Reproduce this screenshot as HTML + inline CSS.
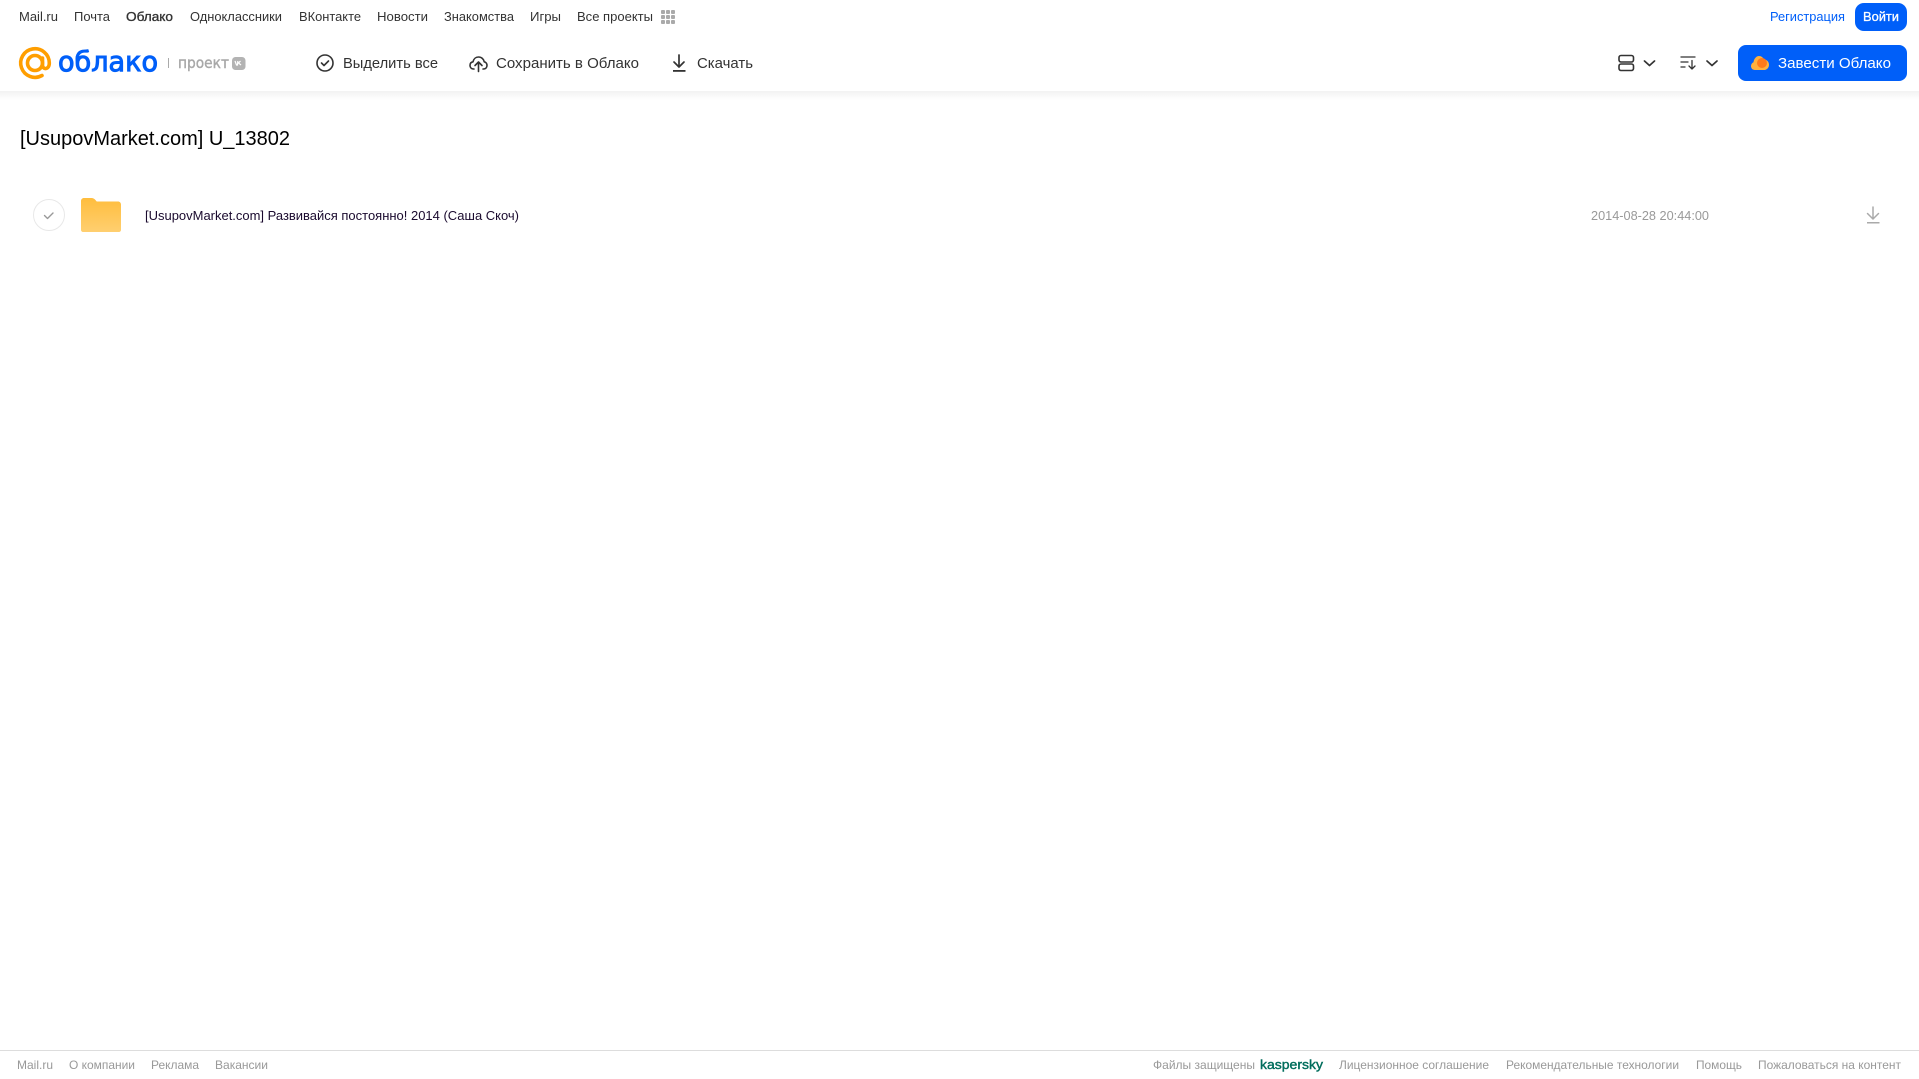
<!DOCTYPE html>
<html lang="ru">
<head>
<meta charset="utf-8">
<title>[UsupovMarket.com] U_13802</title>
<style>
html,body{margin:0;padding:0;background:#fff;width:1919px;height:1079px;overflow:hidden}
svg{display:block;position:absolute;left:0;top:0}
text{font-family:"Liberation Sans",sans-serif}
.n{font-size:13px;fill:#333}
.t{font-size:14.5px;fill:#333}
.f{font-size:12px;fill:#999}
</style>
</head>
<body>
<svg width="1919" height="1079" viewBox="0 0 1919 1079" xmlns="http://www.w3.org/2000/svg">
<defs>
<linearGradient id="sh" x1="0" y1="0" x2="0" y2="1"><stop offset="0" stop-color="#f2f2f2"/><stop offset="1" stop-color="#fff"/></linearGradient>
<linearGradient id="fd" x1="0" y1="0" x2="0" y2="1"><stop offset="0" stop-color="#ffbd3d"/><stop offset="1" stop-color="#ffcf70"/></linearGradient>
</defs>
<rect x="0" y="91" width="1919" height="9" fill="url(#sh)"/>

<!-- top nav -->
<text class="n" x="19" y="21" textLength="39" lengthAdjust="spacingAndGlyphs">Mail.ru</text>
<text class="n" x="74" y="21" textLength="36" lengthAdjust="spacingAndGlyphs">Почта</text>
<text class="n" x="126" y="21" textLength="47" lengthAdjust="spacingAndGlyphs" stroke="#333" stroke-width=".35">Облако</text>
<text class="n" x="190" y="21" textLength="92" lengthAdjust="spacingAndGlyphs">Одноклассники</text>
<text class="n" x="299" y="21" textLength="62" lengthAdjust="spacingAndGlyphs">ВКонтакте</text>
<text class="n" x="377" y="21" textLength="51" lengthAdjust="spacingAndGlyphs">Новости</text>
<text class="n" x="444" y="21" textLength="70" lengthAdjust="spacingAndGlyphs">Знакомства</text>
<text class="n" x="530" y="21" textLength="31" lengthAdjust="spacingAndGlyphs">Игры</text>
<text class="n" x="577" y="21" textLength="76" lengthAdjust="spacingAndGlyphs">Все проекты</text>
<g fill="#aaa">
<rect x="661" y="10" width="4" height="4" rx="1"/><rect x="666" y="10" width="4" height="4" rx="1"/><rect x="671" y="10" width="4" height="4" rx="1"/>
<rect x="661" y="15" width="4" height="4" rx="1"/><rect x="666" y="15" width="4" height="4" rx="1"/><rect x="671" y="15" width="4" height="4" rx="1"/>
<rect x="661" y="20" width="4" height="4" rx="1"/><rect x="666" y="20" width="4" height="4" rx="1"/><rect x="671" y="20" width="4" height="4" rx="1"/>
</g>
<text x="1770" y="21" font-size="13" fill="#005ff9" textLength="75" lengthAdjust="spacingAndGlyphs">Регистрация</text>
<rect x="1855" y="3" width="52" height="28" rx="9" fill="#005ff9"/>
<text x="1863" y="21" font-size="13" fill="#fff" stroke="#fff" stroke-width=".3" textLength="36" lengthAdjust="spacingAndGlyphs">Войти</text>

<!-- logo -->
<circle cx="35" cy="63" r="7.500" fill="none" stroke="#ff9e00" stroke-width="3.600"/>
<path d="M42.500 58V65c0 5 6.800 5 6.800-2A14.300 14.300 0 1 0 42 75.500" fill="none" stroke="#ff9e00" stroke-width="3.600" stroke-linecap="round"/>
<text x="58" y="71" font-size="28" fill="#005ff9" stroke="#005ff9" stroke-width="1" style="font-family:'DejaVu Sans',sans-serif" textLength="100" lengthAdjust="spacingAndGlyphs">облако</text>
<rect x="168" y="58" width="1" height="10" fill="#aaa"/>
<text x="178" y="68" font-size="15" fill="#a8a8a8" stroke="#a8a8a8" stroke-width=".4" style="font-family:'DejaVu Sans',sans-serif" textLength="51" lengthAdjust="spacingAndGlyphs">проект</text>
<rect x="232" y="57" width="13.500" height="13" rx="3.500" fill="#b3b3b3"/>
<path d="M235 61l1.500 4h1l.3-4m2.700 0l-2 2 2.500 2" fill="none" stroke="#fff" stroke-width="1.200"/>

<!-- toolbar -->
<circle cx="325" cy="63" r="8" fill="none" stroke="#333" stroke-width="1.600"/>
<path d="M321.500 63l2.500 2.500 4.500-4.500" fill="none" stroke="#333" stroke-width="1.600" stroke-linecap="round" stroke-linejoin="round"/>
<text class="t" x="343" y="68" textLength="95" lengthAdjust="spacingAndGlyphs">Выделить все</text>
<path d="M474 69h-.5c-2.300 0-3.500-1.800-3.500-3.600 0-1.900 1.200-3.300 3-3.600.6-2.900 2.800-4.800 5.500-4.800 3 0 5.200 2.100 5.700 4.800 1.600.3 2.800 1.700 2.800 3.600 0 1.900-1.300 3.600-3.500 3.600H483" fill="none" stroke="#333" stroke-width="1.600" stroke-linecap="round" stroke-linejoin="round"/>
<path d="M478.500 71.500V62m-3.500 3.500l3.500-3.500 3.500 3.500" fill="none" stroke="#333" stroke-width="1.600" stroke-linecap="round" stroke-linejoin="round"/>
<text class="t" x="496" y="68" textLength="143" lengthAdjust="spacingAndGlyphs">Сохранить в Облако</text>
<path d="M679 55v12m-5-5l5 5 5-5" fill="none" stroke="#333" stroke-width="1.700" stroke-linecap="round" stroke-linejoin="round"/>
<rect x="673" y="70" width="12.500" height="1.800" fill="#333"/>
<text class="t" x="697" y="68" textLength="56" lengthAdjust="spacingAndGlyphs">Скачать</text>

<!-- right toolbar -->
<rect x="1619" y="55.500" width="14.500" height="6.500" rx="2" fill="none" stroke="#333" stroke-width="1.600"/>
<rect x="1619" y="64" width="14.500" height="6.500" rx="2" fill="none" stroke="#333" stroke-width="1.600"/>
<path d="M1644.500 61l5 4.500 5-4.500" fill="none" stroke="#333" stroke-width="1.700" stroke-linecap="round" stroke-linejoin="round"/>
<path d="M1681 57h14M1681 62h7M1681 67h4M1692 60.500v8.500m-3-3l3 3 3-3" fill="none" stroke="#333" stroke-width="1.300" stroke-linecap="round" stroke-linejoin="round"/>
<path d="M1707 61l5 4.500 5-4.500" fill="none" stroke="#333" stroke-width="1.700" stroke-linecap="round" stroke-linejoin="round"/>
<rect x="1738" y="45" width="169" height="36" rx="8" fill="#005ff9"/>
<path d="M1755 70c-2.500 0-4-1.800-4-4 0-1.800 1-3.200 2.500-3.800.3-3 2.600-6.200 5.500-6.200 2.500 0 4 1.500 4.800 3.500 3 0 5.200 2.300 5.200 5.200 0 3-2.200 5.300-5 5.300z" fill="#ffb13d"/>
<circle cx="1762" cy="63" r="5" fill="#ff7a1a"/>
<text x="1778" y="68" font-size="14.500" fill="#fff" textLength="113" lengthAdjust="spacingAndGlyphs">Завести Облако</text>

<!-- title -->
<text x="20" y="145" font-size="20" fill="#000" textLength="270" lengthAdjust="spacingAndGlyphs">[UsupovMarket.com] U_13802</text>

<!-- row -->
<circle cx="49" cy="215" r="15.500" fill="#fff" stroke="#e8e8e8"/>
<path d="M44.500 215.500l3 3 5.500-5.500" fill="none" stroke="#999" stroke-width="1.400" stroke-linecap="round" stroke-linejoin="round"/>
<path d="M81 201c0-1.700 1.300-3 3-3h7.500c1.500 0 2.700.6 3.700 1.800l1.500 1.700h21.300c1.700 0 3 1.300 3 3V230c0 1.100-.9 2-2 2H83c-1.100 0-2-.9-2-2z" fill="url(#fd)"/>
<text x="145" y="220" font-size="13" fill="#1a0a2e" textLength="374" lengthAdjust="spacingAndGlyphs">[UsupovMarket.com] Развивайся постоянно! 2014 (Саша Скоч)</text>
<text x="1591" y="220" font-size="13" fill="#999" textLength="118" lengthAdjust="spacingAndGlyphs">2014-08-28 20:44:00</text>
<path d="M1873 207v12m-5.500-5.500l5.500 5.500 5.500-5.500" fill="none" stroke="#aaa" stroke-width="1.500" stroke-linecap="round" stroke-linejoin="round"/>
<rect x="1867" y="222" width="12.500" height="1.500" fill="#aaa"/>

<!-- footer -->
<rect x="0" y="1050" width="1919" height="1" fill="#ddd"/>
<text class="f" x="17" y="1069" textLength="36" lengthAdjust="spacingAndGlyphs">Mail.ru</text>
<text class="f" x="69" y="1069" textLength="66" lengthAdjust="spacingAndGlyphs">О компании</text>
<text class="f" x="151" y="1069" textLength="48" lengthAdjust="spacingAndGlyphs">Реклама</text>
<text class="f" x="215" y="1069" textLength="53" lengthAdjust="spacingAndGlyphs">Вакансии</text>
<text class="f" x="1153" y="1069" textLength="102" lengthAdjust="spacingAndGlyphs">Файлы защищены</text>
<text x="1260" y="1069" font-size="13" fill="#006d5c" stroke="#006d5c" stroke-width=".4" textLength="63" lengthAdjust="spacingAndGlyphs">kaspersky</text>
<text class="f" x="1339" y="1069" textLength="150" lengthAdjust="spacingAndGlyphs">Лицензионное соглашение</text>
<text class="f" x="1506" y="1069" textLength="173" lengthAdjust="spacingAndGlyphs">Рекомендательные технологии</text>
<text class="f" x="1696" y="1069" textLength="46" lengthAdjust="spacingAndGlyphs">Помощь</text>
<text class="f" x="1758" y="1069" textLength="143" lengthAdjust="spacingAndGlyphs">Пожаловаться на контент</text>
</svg>
</body>
</html>
